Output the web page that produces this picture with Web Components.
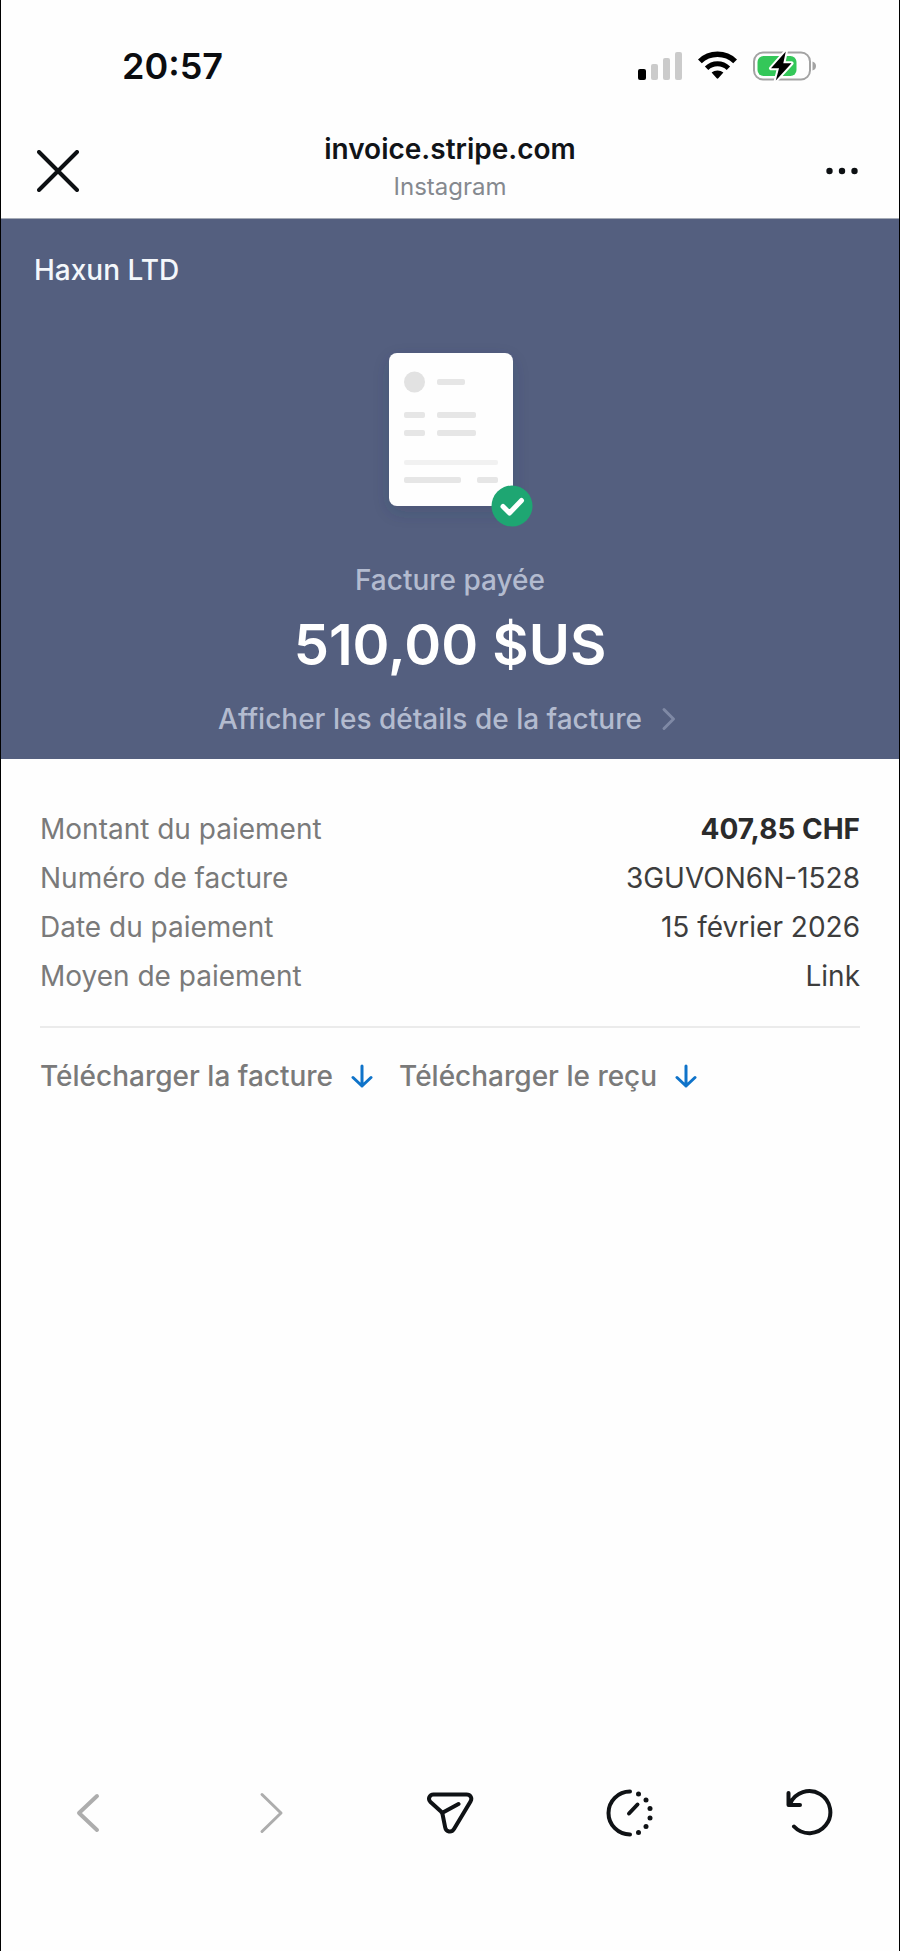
<!DOCTYPE html>
<html lang="fr">
<head>
<meta charset="utf-8">
<meta name="viewport" content="width=device-width, initial-scale=1">
<title>invoice.stripe.com</title>
<style>
    body {
        margin: 0;
        background-color: #fefefe;
        font-family: Inter, "Liberation Sans", sans-serif;
        font-size: 28px;
        line-height: 34px;
    }
</style>
</head>
<body>
<browser-view>
    <status-bar time="20:57"></status-bar>
    <browser-header>
        <span slot="title">invoice.stripe.com</span>
        <span slot="subtitle">Instagram</span>
    </browser-header>
    <invoice-hero>
        <span slot="merchant">Haxun LTD</span>
        <span slot="status">Facture payée</span>
        <span slot="amount">510,00 $US</span>
        <span slot="details">Afficher les détails de la facture</span>
    </invoice-hero>
    <payment-details>
        <payment-row label="Montant du paiement" strong>407,85 CHF</payment-row>
        <payment-row label="Numéro de facture">3GUVON6N-1528</payment-row>
        <payment-row label="Date du paiement">15 février 2026</payment-row>
        <payment-row label="Moyen de paiement">Link</payment-row>
        <download-link slot="links">Télécharger la facture</download-link>
        <download-link slot="links">Télécharger le reçu</download-link>
    </payment-details>
    <browser-toolbar></browser-toolbar>
</browser-view>

<script>
function define(name, html, setup) {
    const template = document.createElement("template");
    template.innerHTML = html;

    window.customElements.define(name, class extends HTMLElement {
        constructor() {
            super();
            const shadowRoot = this.attachShadow({ mode: "open" });
            shadowRoot.appendChild(template.content.cloneNode(true));
            if (setup) setup(this, shadowRoot);
        }
    });
}

define("browser-view", `
    <style>
        :host {
            min-height: 100vh;
            box-sizing: border-box;
            border-left: 1px solid #000;
            border-right: 1px solid #000;

            display: flex;
            flex-direction: column;
        }
    </style>
    <slot></slot>
`);

define("status-bar", `
    <style>
        :host {
            padding: 48px 83px 0 121px;

            display: flex;
            justify-content: space-between;
            align-items: center;
        }

        .time {
            font-size: 36px;
            line-height: 36px;
            font-weight: 600;
            color: #0b0d10;
        }

        .icons {
            height: 36px;

            display: flex;
            align-items: center;
            gap: 16px;
        }
    </style>
    <span class="time"></span>
    <div class="icons">
        <svg width="44" height="30" viewBox="0 0 44 30">
            <rect x="0" y="18" width="8" height="11" rx="2" fill="#000"/>
            <rect x="13" y="13" width="7" height="16" rx="2" fill="#cbcbcb"/>
            <rect x="25" y="7" width="7" height="22" rx="2" fill="#cbcbcb"/>
            <rect x="37" y="1" width="7" height="28" rx="2" fill="#cbcbcb"/>
        </svg>
        <svg width="39" height="30" viewBox="0 0 39 30">
            <path d="M1.9 10.4C11.5 0.9 27.5 0.9 37.1 10.4" fill="none" stroke="#000" stroke-width="5.4"/>
            <path d="M8.6 17.2C14.8 11.3 24.2 11.3 30.4 17.2" fill="none" stroke="#000" stroke-width="5"/>
            <path d="M13.6 21.6C17 18.9 22 18.9 25.4 21.6L20.3 27.3Q19.5 28.2 18.7 27.3Z" fill="#000"/>
        </svg>
        <svg width="63" height="30" viewBox="0 0 63 30">
            <rect x="1" y="1.5" width="56" height="27" rx="9" fill="none" stroke="#a3a3a3" stroke-width="2"/>
            <path d="M59.5 10.5Q63 11.5 63 15T59.5 19.5Z" fill="#a3a3a3"/>
            <rect x="4.5" y="5" width="39" height="20" rx="6" fill="#34c759"/>
            <path d="M32.8 0.5L18 17.3H26L22.8 29.5L38.5 12.3H30.3Z" fill="#000" stroke="#fff" stroke-width="4" paint-order="stroke" stroke-linejoin="round"/>
        </svg>
    </div>
`, (host, root) => {
    root.querySelector(".time").textContent = host.getAttribute("time");
});

define("browser-header", `
    <style>
        :host {
            height: 95px;
            padding: 39px 27px 0;
            border-bottom: 1px solid #a5abb6;

            display: grid;
            grid-template-columns: 60px 1fr 60px;
            align-items: center;
        }

        button {
            width: 60px;
            height: 60px;
            padding: 0;
            border: none;
            background: none;

            display: flex;
            align-items: center;
            justify-content: center;
            cursor: pointer;
        }

        .titles {
            padding-bottom: 5px;
            text-align: center;
            line-height: 38px;
        }

        .title {
            font-weight: 600;
            color: #111418;
        }

        .subtitle {
            font-size: 24px;
            color: #85898f;
        }
    </style>
    <button aria-label="Fermer">
        <svg width="42" height="42" viewBox="0 0 42 42" fill="none" stroke="#0d1013" stroke-width="4" stroke-linecap="round">
            <path d="M2 2L40 40M40 2L2 40"/>
        </svg>
    </button>
    <div class="titles">
        <div class="title"><slot name="title"></slot></div>
        <div class="subtitle"><slot name="subtitle"></slot></div>
    </div>
    <button aria-label="Plus">
        <svg width="32" height="8" viewBox="0 0 32 8" fill="#0d1013">
            <circle cx="3.5" cy="4" r="3.2"/>
            <circle cx="16" cy="4" r="3.2"/>
            <circle cx="28.5" cy="4" r="3.2"/>
        </svg>
    </button>
`);

define("invoice-hero", `
    <style>
        :host {
            padding: 34px 33px 23px;
            background-color: #545f7f;
            color: #b3bbcf;
            font-weight: 500;

            display: flex;
            flex-direction: column;
            align-items: center;
        }

        .merchant {
            align-self: flex-start;
            color: #f4f7fb;
        }

        .paper {
            margin-top: 65px;
            overflow: visible;
        }

        .status {
            margin-top: 35px;
        }

        .amount {
            margin-top: 16px;
            font-size: 56px;
            line-height: 64px;
            font-weight: 600;
            color: #fff;
        }

        a {
            margin-top: 25px;
            color: inherit;
            text-decoration: none;

            display: flex;
            align-items: center;
            gap: 16px;
        }
    </style>
    <div class="merchant"><slot name="merchant"></slot></div>
    <svg class="paper" width="168" height="176" viewBox="0 0 168 176">
        <defs>
            <filter id="shadow" x="-30%" y="-30%" width="160%" height="160%">
                <feDropShadow dx="0" dy="6" stdDeviation="9" flood-color="#2c3654" flood-opacity="0.2"/>
            </filter>
        </defs>
        <g transform="translate(2 0)">
            <rect x="21" y="1" width="124" height="153" rx="8" fill="#fefefe" filter="url(#shadow)"/>
            <circle cx="46.5" cy="30" r="10.5" fill="#e2e2e2"/>
            <g fill="#e6e6e6">
                <rect x="69" y="27" width="28" height="6" rx="2"/>
                <rect x="36" y="60" width="21" height="6" rx="2"/>
                <rect x="69" y="60" width="39" height="6" rx="2"/>
                <rect x="36" y="78" width="21" height="6" rx="2"/>
                <rect x="69" y="78" width="39" height="6" rx="2"/>
                <rect x="36" y="125" width="57" height="6" rx="2"/>
                <rect x="109" y="125" width="21" height="6" rx="2"/>
            </g>
            <rect x="36" y="108" width="94" height="5" rx="2" fill="#f1f1f1"/>
            <circle cx="144" cy="154" r="20.5" fill="#1ea672"/>
            <path d="M135 154.5L141.5 161L153.5 148.5" fill="none" stroke="#fff" stroke-width="5" stroke-linecap="round" stroke-linejoin="round"/>
        </g>
    </svg>
    <div class="status"><slot name="status"></slot></div>
    <div class="amount"><slot name="amount"></slot></div>
    <a href="#">
        <slot name="details"></slot>
        <svg width="24" height="24" viewBox="0 0 24 24" fill="none" stroke="#7f89a5" stroke-width="3" stroke-linecap="round" stroke-linejoin="round">
            <path d="M6 2.500L15.500 12L6 21.500"/>
        </svg>
    </a>
`);

define("payment-details", `
    <style>
        :host {
            padding: 46px 39px;
            flex-grow: 1;
        }

        .links {
            margin-top: 25px;
            padding-top: 31px;
            border-top: 2px solid #ebebeb;

            display: flex;
            flex-wrap: wrap;
            gap: 25px;
        }
    </style>
    <slot></slot>
    <div class="links"><slot name="links"></slot></div>
`);

define("payment-row", `
    <style>
        :host {
            line-height: 49px;
            color: #3d3d3d;

            display: flex;
            justify-content: space-between;
        }

        :host([strong]) .value {
            font-weight: 700;
            color: #2b2b2b;
        }

        .label {
            color: #7a7a7a;
        }
    </style>
    <span class="label"></span>
    <span class="value"><slot></slot></span>
`, (host, root) => {
    root.querySelector(".label").textContent = host.getAttribute("label");
});

define("download-link", `
    <style>
        :host {
            display: block;
        }

        a {
            color: #7a7a7a;
            font-weight: 500;
            text-decoration: none;

            display: flex;
            align-items: center;
            gap: 17px;
        }
    </style>
    <a href="#">
        <slot></slot>
        <svg width="24" height="24" viewBox="0 0 24 24" fill="none" stroke="#0f73c9" stroke-width="3" stroke-linecap="round" stroke-linejoin="round">
            <path d="M12 2V22M3 13.5L12 22L21 13.5"/>
        </svg>
    </a>
`);

define("browser-toolbar", `
    <style>
        :host {
            padding-bottom: 108px;

            display: grid;
            grid-template-columns: repeat(5, 1fr);
            justify-items: center;
        }

        button {
            width: 60px;
            height: 60px;
            padding: 0;
            border: none;
            background: none;
            color: #0f1215;

            display: flex;
            align-items: center;
            justify-content: center;
            cursor: pointer;
        }

        button:disabled {
            color: #adadad;
        }

        svg {
            fill: none;
            stroke: currentColor;
            stroke-width: 4;
            stroke-linecap: round;
            stroke-linejoin: round;
        }
    </style>
    <button aria-label="Précédent" disabled>
        <svg width="48" height="48" viewBox="0 0 48 48"><path d="M30 7L12 24L30 41"/></svg>
    </button>
    <button aria-label="Suivant" disabled>
        <svg width="48" height="48" viewBox="0 0 48 48" style="stroke-width: 3"><path d="M16 5.5L35 24L16 42.5"/></svg>
    </button>
    <button aria-label="Envoyer">
        <svg width="48" height="48" viewBox="0 0 48 48">
            <path d="M7.5 5.5H40.5C44.5 5.5 46.5 9 44.5 12.5L28 40C25.5 44 20 43 19.2 38.5L16.5 25Q16 23.5 15 22.5L4.5 13C1.5 10 3.5 5.5 7.5 5.5ZM16 24L32.5 15"/>
        </svg>
    </button>
    <button aria-label="Historique">
        <svg width="48" height="48" viewBox="0 0 48 48">
            <path d="M24 2.5A21.5 21.5 0 0 0 24 45.5M23 24.5L31.500 15.5"/>
            <g fill="currentColor" stroke="none">
                <circle cx="32.5" cy="5" r="2.5"/>
                <circle cx="40" cy="11" r="2.5"/>
                <circle cx="44" cy="19.5" r="2.5"/>
                <circle cx="44" cy="29" r="2.5"/>
                <circle cx="40" cy="37.5" r="2.5"/>
                <circle cx="32.5" cy="43.5" r="2.5"/>
            </g>
        </svg>
    </button>
    <button aria-label="Actualiser">
        <svg width="48" height="48" viewBox="0 0 48 48">
            <path d="M3.5 4V16H15M5 15A21 21 0 1 1 9 37.5"/>
        </svg>
    </button>
`);
</script>
</body>
</html>
